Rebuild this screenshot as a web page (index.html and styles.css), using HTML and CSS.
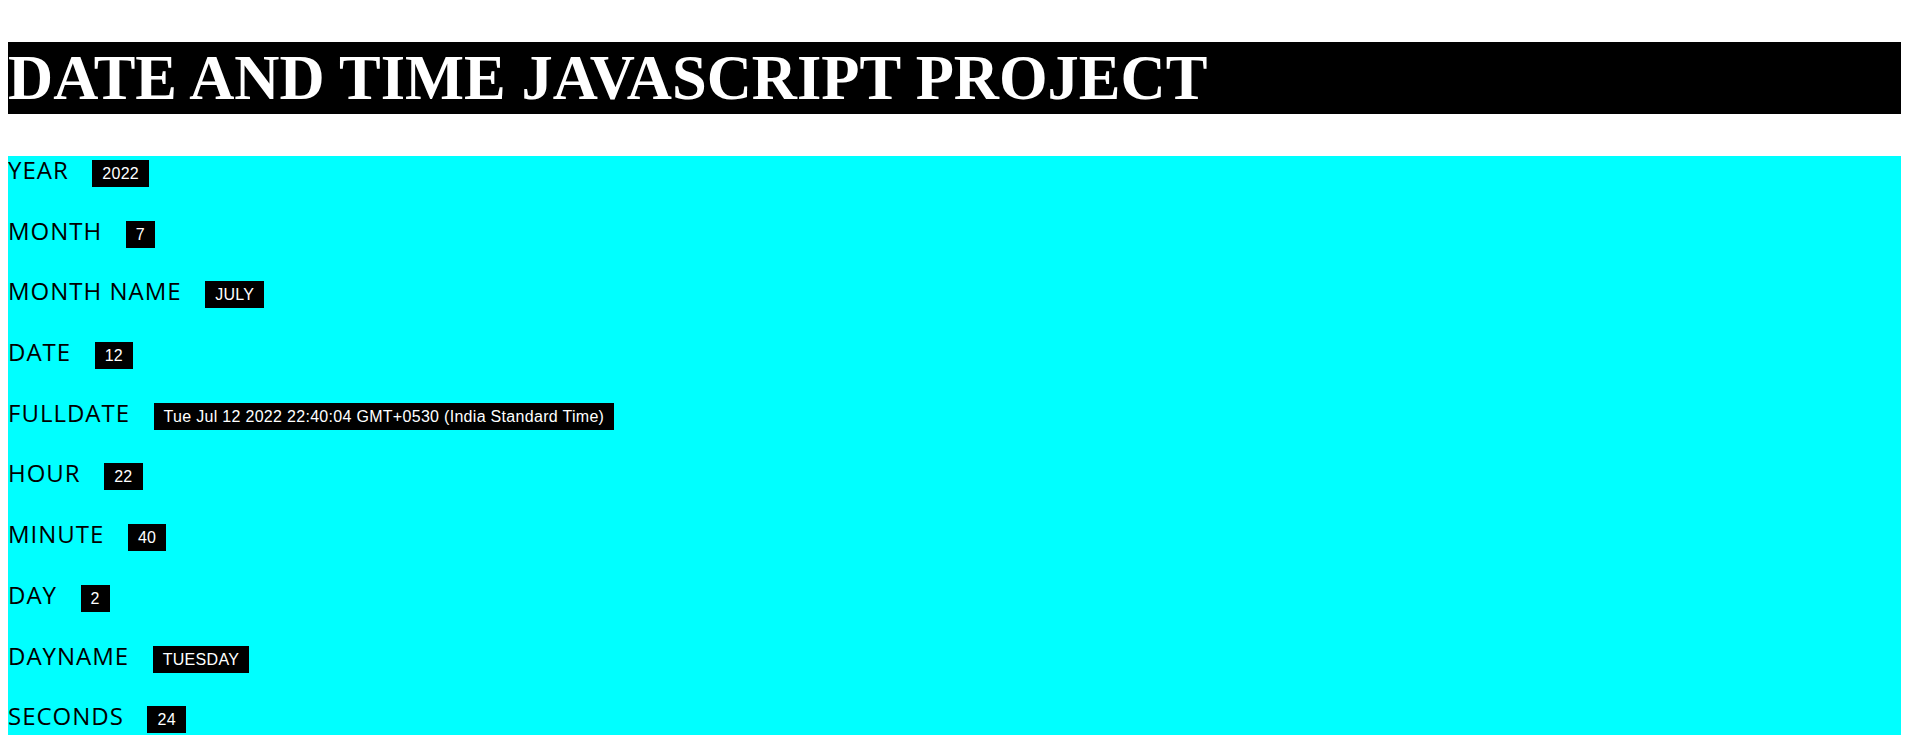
FILE: index.html
```html
<!DOCTYPE html>
<html lang="en">
<head>
<meta charset="utf-8">
<title>Date and Time JavaScript Project</title>
<link rel="stylesheet" href="styles.css">
</head>
<body>
<h1 class="title">DATE AND TIME JAVASCRIPT PROJECT</h1>
<div class="panel">
  <div class="row"><span class="label">YEAR</span><span class="value">2022</span></div>
  <div class="row"><span class="label">MONTH</span><span class="value">7</span></div>
  <div class="row"><span class="label">MONTH NAME</span><span class="value">JULY</span></div>
  <div class="row"><span class="label">DATE</span><span class="value">12</span></div>
  <div class="row"><span class="label">FULLDATE</span><span class="value">Tue Jul 12 2022 22:40:04 GMT+0530 (India Standard Time)</span></div>
  <div class="row"><span class="label">HOUR</span><span class="value">22</span></div>
  <div class="row"><span class="label">MINUTE</span><span class="value">40</span></div>
  <div class="row"><span class="label">DAY</span><span class="value">2</span></div>
  <div class="row"><span class="label">DAYNAME</span><span class="value">TUESDAY</span></div>
  <div class="row"><span class="label">SECONDS</span><span class="value">24</span></div>
</div>
</body>
</html>
```
FILE: styles.css
```css
body {
  margin: 8px;
  background: #ffffff;
}

.title {
  margin: 34px 0 42px;
  padding: 0;
  background: #000000;
  color: #ffffff;
  font-family: "Liberation Serif", "Times New Roman", serif;
  font-weight: bold;
  font-size: 62.5px;
  line-height: 72px;
}

.panel {
  background: #00ffff;
  display: flex;
  flex-direction: column;
  gap: 32.7px;
  padding-bottom: 40px;
}

.row {
  font-family: "Open Sans", "Noto Sans", sans-serif;
  font-size: 24px;
  line-height: 28px;
  letter-spacing: 1px;
  color: #000000;
}

.value {
  margin-left: 23.5px;
  padding: 5px 10px;
  background: #000000;
  color: #ffffff;
  font-family: "Liberation Sans", Arial, sans-serif;
  font-size: 16px;
  line-height: 16px;
  letter-spacing: 0.3px;
}
```
